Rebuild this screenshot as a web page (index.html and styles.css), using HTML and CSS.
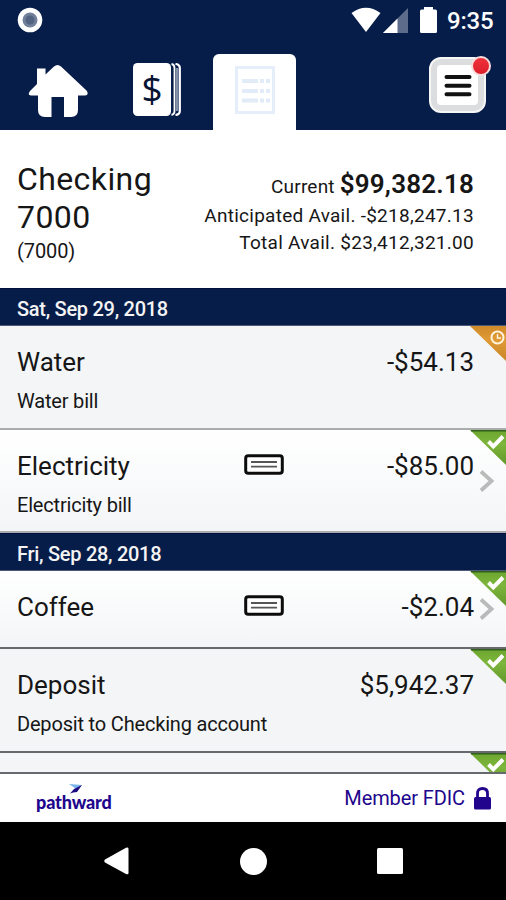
FILE: index.html
```
<!DOCTYPE html>
<html lang="en">
<head>
  <meta charset="UTF-8" />
  <meta name="viewport" content="width=device-width, initial-scale=1.0"/>
  <title>Checking 7000</title>
  <link rel="stylesheet" href="styles.css">
</head>
<body>

  <svg class="defs" width="0" height="0">
    <defs>
      <linearGradient id="green" x1="0" y1="0" x2="0" y2="1">
        <stop offset="0" stop-color="#6da52f"/>
        <stop offset="0.4" stop-color="#7db63c"/>
        <stop offset="1" stop-color="#62982a"/>
      </linearGradient>
      <linearGradient id="orange" x1="0" y1="0" x2="0" y2="1">
        <stop offset="0" stop-color="#cf8a2a"/>
        <stop offset="0.4" stop-color="#e09a35"/>
        <stop offset="1" stop-color="#c88428"/>
      </linearGradient>
      <symbol id="cleared" viewBox="0 0 36 36">
        <path d="M0 0H36V35Z" fill="url(#green)"/>
        <path d="M1 .7H36" stroke="#31621c" stroke-width="1.4"/>
        <path d="M18.500 11.500l4.800 4.800L33 6.500" fill="none" stroke="#fff" stroke-width="4"/>
      </symbol>
      <symbol id="pending" viewBox="0 0 36 36">
        <path d="M0 0H36V35Z" fill="url(#orange)"/>
        <circle cx="27.500" cy="11.500" r="6" fill="none" stroke="#fff3dc" stroke-width="2"/>
        <path d="M27.500 8v4h3.500" fill="none" stroke="#fff3dc" stroke-width="1.500"/>
      </symbol>
      <symbol id="check" viewBox="0 0 40 21">
        <rect x="1.700" y="1.700" width="36.600" height="17.600" rx="2.500" fill="#fff" stroke="#0c0c0c" stroke-width="3"/>
        <path d="M7 8h26M7 12.700h26" stroke="#555" stroke-width="1.800"/>
      </symbol>
      <symbol id="arrow" viewBox="0 0 16 24">
        <path d="M2 2.500L12.500 12L2 21.500" fill="none" stroke="#bababa" stroke-width="3.800"/>
      </symbol>
    </defs>
  </svg>

  <header class="top">
    <div class="status">
      <svg width="26" height="26" viewBox="0 0 26 26">
        <circle cx="13" cy="13" r="12.300" fill="#fff"/>
        <circle cx="13" cy="13" r="7.500" fill="#72809a"/>
        <circle cx="13" cy="13" r="4.500" fill="#536483"/>
      </svg>
      <div class="status-right">
        <svg class="wifi" width="30" height="26" viewBox="0 0 30 26">
          <path d="M.5 6Q15-4.500 29.500 6L15 25Z" fill="#fff"/>
        </svg>
        <svg class="signal" width="25" height="25" viewBox="0 0 25 25">
          <path d="M25 0V25H0Z" fill="#5d6c8b"/>
          <path d="M14.500 10.500V25H0Z" fill="#fff"/>
        </svg>
        <svg class="battery" width="17" height="26" viewBox="0 0 17 26">
          <path d="M4 0H13V2.500H15.500Q17 2.500 17 4V24.500Q17 26 15.500 26H1.500Q0 26 0 24.500V4Q0 2.500 1.500 2.500H4Z" fill="#fff"/>
        </svg>
        <span class="time">9:35</span>
      </div>
    </div>

    <nav class="tabs">
      <a class="tab home">
        <svg width="60" height="53" viewBox="0 0 60 53">
          <path d="M9 4.500H17.500V10.500L26 2.500Q29.500-.5 33 2.500L59 27Q61 31.500 57 31.500H50V46Q50 53 43 53H36V33H23.500V53H17Q10 53 10 46V31.500H3Q-1 31.500 2 27L9 20Z" fill="#fff"/>
        </svg>
      </a>
      <a class="tab pay">
        <svg width="49" height="53" viewBox="0 0 49 53">
          <rect x="0" y="0" width="38" height="53" rx="4.500" fill="#fff"/>
          <path d="M38.500 1Q41.500 1.500 41.500 5V48Q41.500 51.500 38.500 52" fill="none" stroke="#fff" stroke-width="1.800"/>
          <path d="M42.500 1Q46.800 1.500 46.800 5V48Q46.800 51.500 42.500 52" fill="none" stroke="#fff" stroke-width="2.200"/>
          <path d="M44.200 5V48" stroke="#8490a8" stroke-width="2.500"/>
          <text x="19" y="38.500" text-anchor="middle" class="dollar">$</text>
        </svg>
      </a>
      <a class="tab history active">
        <svg width="40" height="48" viewBox="0 0 40 48">
          <rect x="1.500" y="1.500" width="37" height="45" fill="none" stroke="#e5eefa" stroke-width="3"/>
          <path d="M7 15H23M7 25H23M7 34.500H23" stroke="#e2ecf9" stroke-width="4"/>
          <path d="M25 15H29M25 25H29M25 34.500H29M31 15H35M31 25H35M31 34.500H35" stroke="#e2ecf9" stroke-width="4"/>
        </svg>
      </a>
      <a class="menu">
        <span class="menu-inner">
          <svg width="28" height="24" viewBox="0 0 28 24">
            <path d="M2.500 4H25.500M2.500 12.700H25.500M2.500 21.300H25.500" stroke="#111" stroke-width="4" stroke-linecap="round"/>
          </svg>
        </span>
        <span class="badge"></span>
      </a>
    </nav>
  </header>

  <section class="account">
    <div class="account-name">
      <h1>Checking<br>7000</h1>
      <p>(7000)</p>
    </div>
    <div class="balances">
      <div class="current">Current <b>$99,382.18</b></div>
      <div class="anticipated">Anticipated Avail. -$218,247.13</div>
      <div class="total">Total Avail. $23,412,321.00</div>
    </div>
  </section>

  <main class="list">
    <h2 class="date">Sat, Sep 29, 2018</h2>

    <div class="row gray">
      <div class="line"><span class="name">Water</span><span class="amount">-$54.13</span></div>
      <div class="memo">Water bill</div>
      <svg class="corner" width="36" height="36"><use href="#pending"/></svg>
    </div>

    <div class="row last">
      <div class="line">
        <span class="name">Electricity</span>
        <svg class="check" width="40" height="21"><use href="#check"/></svg>
        <span class="amount">-$85.00</span>
      </div>
      <div class="memo">Electricity bill</div>
      <svg class="corner" width="36" height="36"><use href="#cleared"/></svg>
      <svg class="arrow" width="16" height="24"><use href="#arrow"/></svg>
    </div>

    <h2 class="date">Fri, Sep 28, 2018</h2>

    <div class="row short">
      <div class="line">
        <span class="name">Coffee</span>
        <svg class="check" width="40" height="21"><use href="#check"/></svg>
        <span class="amount">-$2.04</span>
      </div>
      <svg class="corner" width="36" height="36"><use href="#cleared"/></svg>
      <svg class="arrow" width="16" height="24"><use href="#arrow"/></svg>
    </div>

    <div class="row gray deposit">
      <div class="line"><span class="name">Deposit</span><span class="amount">$5,942.37</span></div>
      <div class="memo">Deposit to Checking account</div>
      <svg class="corner" width="36" height="36"><use href="#cleared"/></svg>
    </div>

    <div class="row gray cut">
      <svg class="corner" width="36" height="36"><use href="#cleared"/></svg>
    </div>
  </main>

  <footer class="footer">
    <div class="logo">
      <svg width="13" height="10" viewBox="0 0 13 10">
        <path d="M0 0L13 1L8 5.500Z" fill="#79b5ea"/>
        <path d="M13 1L8 8Q4 8 1 9.500L5 5Z" fill="#1d0a80"/>
      </svg>
      <span>pathward</span>
    </div>
    <div class="fdic">
      <span>Member FDIC</span>
      <svg width="17" height="23" viewBox="0 0 17 23">
        <path d="M3.500 11V6.500Q3.500 1.500 8.500 1.500T13.500 6.500V11" fill="none" stroke="#21058c" stroke-width="2.800"/>
        <rect x="0" y="10" width="17" height="12.500" rx="1.500" fill="#21058c"/>
      </svg>
    </div>
  </footer>

  <div class="navbar">
    <svg width="25" height="28" viewBox="0 0 25 28"><path d="M1 12.500L22 .7Q24.500 0 24.500 2V26Q24.500 28 22 27L1 15.500Q-.5 14 1 12.500Z" fill="#fff"/></svg>
    <svg width="27" height="27" viewBox="0 0 27 27"><circle cx="13.500" cy="13.500" r="13.500" fill="#fff"/></svg>
    <svg width="26" height="26" viewBox="0 0 26 26"><rect width="26" height="26" rx="1.500" fill="#fff"/></svg>
  </div>

</body>
</html>
```
FILE: styles.css
```
* {
  box-sizing: border-box;
}

body {
  margin: 0;
  width: 506px;
  height: 900px;
  overflow: hidden;
  display: flex;
  flex-direction: column;
  background: #000;
  color: #161616;
  font-family: Roboto, sans-serif;
}

h1, h2, p {
  margin: 0;
  font-weight: 400;
}

svg {
  display: block;
  flex: none;
}

.defs {
  position: absolute;
}

/* header */
.top {
  height: 130px;
  flex: none;
  background: #071d49;
}

.status {
  height: 54px;
  padding: 7px 13px 0 17px;
  display: flex;
  justify-content: space-between;
  align-items: flex-start;
}

.status-right {
  display: flex;
}

.status-right .wifi { margin-right: 2px; }
.status-right .signal { margin: 1px 12px 0 0; }
.status-right .battery { margin-right: 10px; }

.time {
  width: 46px;
  font-size: 24px;
  font-weight: 500;
  line-height: 29px;
  letter-spacing: -0.2px;
  white-space: nowrap;
  color: #fff;
}

.tabs {
  height: 76px;
  display: flex;
  align-items: flex-start;
}

.home { padding: 10px 0 0 28px; }
.pay { padding: 9px 0 0 45px; }

.dollar {
  font: 37px "Open Sans", sans-serif;
  fill: #071433;
}

.history {
  width: 83px;
  height: 76px;
  margin-left: 31px;
  padding: 12px 0 0 22px;
  border-radius: 6px 6px 0 0;
  background: #fff;
}

.menu {
  position: relative;
  width: 57px;
  height: 56px;
  margin: 3px 0 0 133px;
  padding: 6px;
  border-radius: 12px;
  border: 2px solid #f6f6f6;
  background: #dcdddf;
}

.menu-inner {
  height: 40px;
  display: flex;
  align-items: center;
  justify-content: center;
  border-radius: 4px;
  background: #fff;
}

.badge {
  position: absolute;
  top: -3px;
  right: -7px;
  width: 20px;
  height: 20px;
  border-radius: 50%;
  border: 2px solid #f8dcdc;
  background: linear-gradient(#f0303a, #dc1f2c);
}

/* account summary */
.account {
  height: 158px;
  flex: none;
  padding: 30px 32px 0 17px;
  display: flex;
  justify-content: space-between;
  background: #fff;
}

.account h1 {
  font-size: 32px;
  line-height: 38px;
  letter-spacing: 0.4px;
}

.account p {
  font-size: 20px;
  line-height: 31px;
  letter-spacing: -0.1px;
}

.balances {
  padding-top: 8px;
  text-align: right;
  font-size: 19px;
  letter-spacing: 0.27px;
  white-space: nowrap;
}

.current { line-height: 32px; }
.anticipated { line-height: 26px; }
.total { line-height: 28px; }

.current {
  letter-spacing: 0.2px;
}

.current b {
  font-size: 26px;
  font-weight: 600;
}

/* transactions */
.list {
  height: 486px;
  flex: none;
  overflow: hidden;
}

.date {
  height: 38px;
  padding-left: 17px;
  background: #071d49;
  border-top: 1px solid #04103c;
  border-bottom: 1px solid #4c5875;
  color: #f4f4f4;
  font-size: 20px;
  font-weight: 500;
  line-height: 40px;
  letter-spacing: -0.28px;
}

.row {
  position: relative;
  height: 104px;
  padding: 20px 32px 0 17px;
  border-bottom: 2px solid #a9abad;
  background: linear-gradient(#fff, #f3f5f7);
}

.row.gray {
  background: #f3f5f7;
}

.row.last {
  height: 103px;
}

.row.short {
  height: 78px;
}

.row.short,
.row.deposit,
.row.cut {
  border-bottom-color: #66696d;
}

.row.cut {
  height: 21px;
  padding: 0;
  overflow: hidden;
}

.line {
  display: grid;
  grid-template-columns: 227px 40px 1fr;
  align-items: center;
  font-size: 26px;
  line-height: 32px;
}

.check {
  margin-bottom: 3px;
}

.amount {
  grid-column: 3;
  text-align: right;
}

.memo {
  margin-top: 9px;
  font-size: 20px;
  line-height: 29px;
  letter-spacing: -0.18px;
}

.corner {
  position: absolute;
  top: 0;
  right: 0;
}

.arrow {
  position: absolute;
  right: 11px;
  top: 39px;
}

.short .arrow { top: 26px; }

/* footer */
.footer {
  height: 48px;
  flex: none;
  padding: 0 15px 0 36px;
  display: flex;
  justify-content: space-between;
  background: #fff;
  color: #21058c;
}

.logo {
  padding-top: 10px;
  font-family: Lato, sans-serif;
  font-size: 18px;
  font-weight: 900;
  line-height: 17px;
  letter-spacing: -0.15px;
}

.logo svg {
  margin-left: 33px;
}

.fdic {
  display: flex;
  align-items: center;
  gap: 9px;
  font-size: 20px;
  letter-spacing: -0.1px;
}

/* android buttons */
.navbar {
  flex: 1;
  padding: 0 103px 0 104px;
  display: flex;
  align-items: center;
  justify-content: space-between;
  background: #000;
}
```
